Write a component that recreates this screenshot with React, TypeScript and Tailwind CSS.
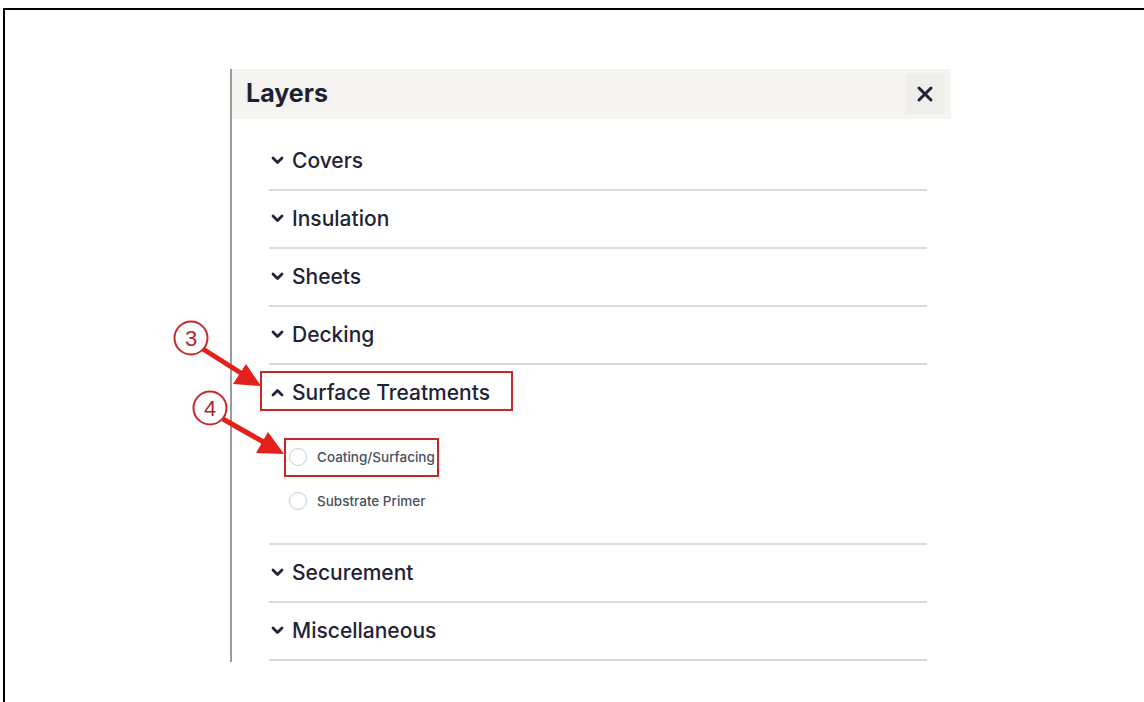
import { useState } from "react";

const SECTIONS = [
  "Covers",
  "Insulation",
  "Sheets",
  "Decking",
  "Surface Treatments",
  "Securement",
  "Miscellaneous",
];

const OPTIONS: Record<string, string[]> = {
  "Surface Treatments": ["Coating/Surfacing", "Substrate Primer"],
};

function Chevron({ up }: { up?: boolean }) {
  return (
    <svg width="13" height="9" viewBox="0 0 13 9" className="shrink-0">
      <path
        d={up ? "M2 7L6.5 2.5L11 7" : "M2 2L6.5 6.5L11 2"}
        fill="none"
        stroke="currentColor"
        strokeWidth="2.8"
        strokeLinecap="round"
        strokeLinejoin="round"
      />
    </svg>
  );
}

function LayerSection({ name, open, onToggle }: { name: string; open: boolean; onToggle: () => void }) {
  const opts = OPTIONS[name] ?? [];
  return (
    <div className="border-b-2 border-[#d9d9d9]">
      <button
        type="button"
        onClick={onToggle}
        className="flex h-[56px] w-full items-center gap-[8px] pl-[2px] pb-[2px] text-left text-[#1f2337]"
      >
        <Chevron up={open} />
        <span className="text-[21px] font-medium leading-none">{name}</span>
      </button>
      {open && (
        <div className="pt-[15px] pb-[19px] pl-[20px]">
          {opts.map((o) => (
            <label key={o} className="flex h-[44px] items-center gap-[10px] pb-[2px]">
              <span className="h-[18px] w-[18px] rounded-full border border-[#c9ccd3] bg-white" />
              <span className="text-[13.5px] font-medium text-[#4a4f5c]">{o}</span>
            </label>
          ))}
        </div>
      )}
    </div>
  );
}

function LayersPanel() {
  const [open, setOpen] = useState<string | null>("Surface Treatments");
  return (
    <div className="h-[593px] w-[721px] border-l-2 border-[#9b9b9b] bg-white">
      <div className="flex h-[50px] items-center justify-between bg-[#f5f4f1] pl-[14px] pr-[6px]">
        <h2 className="text-[25px] font-bold text-[#1e2236]">Layers</h2>
        <button type="button" className="flex h-[40px] w-[40px] items-center justify-center bg-[#efeeeb] text-[#1e2236]">
          <svg width="18" height="18" viewBox="0 0 18 18">
            <path d="M3 3L15 15M15 3L3 15" stroke="currentColor" strokeWidth="3" strokeLinecap="round" />
          </svg>
        </button>
      </div>
      <div className="pl-[37px] pr-[24px] pt-[14px]">
        {SECTIONS.map((s) => (
          <LayerSection key={s} name={s} open={open === s} onToggle={() => setOpen(open === s ? null : s)} />
        ))}
      </div>
    </div>
  );
}

// numbered callouts drawn over the panel
function Callouts() {
  return (
    <svg className="pointer-events-none absolute inset-0" width="1144" height="702" viewBox="0 0 1144 702">
      <rect x="261" y="372" width="251" height="38" fill="none" stroke="#c9272c" strokeWidth="2" />
      <rect x="285" y="439" width="153" height="37" fill="none" stroke="#c9272c" strokeWidth="2" />

      <line x1="203" y1="349" x2="244" y2="375" stroke="#e3201b" strokeWidth="5" />
      <polygon points="261,386 233,384 246,364" fill="#e3201b" />
      <line x1="223" y1="419" x2="267" y2="444" stroke="#e3201b" strokeWidth="5" />
      <polygon points="284,454 256,453 268,432" fill="#e3201b" />

      <circle cx="191" cy="338" r="16.5" fill="white" stroke="#c9272c" strokeWidth="2" />
      <text x="191" y="346" textAnchor="middle" fontSize="22" fill="#b3262a" fontFamily="Liberation Sans, Arial, sans-serif">
        3
      </text>
      <circle cx="210" cy="408" r="16.5" fill="white" stroke="#c9272c" strokeWidth="2" />
      <text x="210" y="416" textAnchor="middle" fontSize="22" fill="#b3262a" fontFamily="Liberation Sans, Arial, sans-serif">
        4
      </text>
    </svg>
  );
}

export default function App() {
  return (
    <div className="relative h-[702px] w-[1144px] overflow-hidden bg-white font-['Inter','Liberation_Sans',sans-serif]">
      <div className="ml-[3px] mt-[8px] h-[694px] border-l-2 border-t-2 border-black pl-[225px] pt-[59px]">
        <LayersPanel />
      </div>
      <Callouts />
    </div>
  );
}
